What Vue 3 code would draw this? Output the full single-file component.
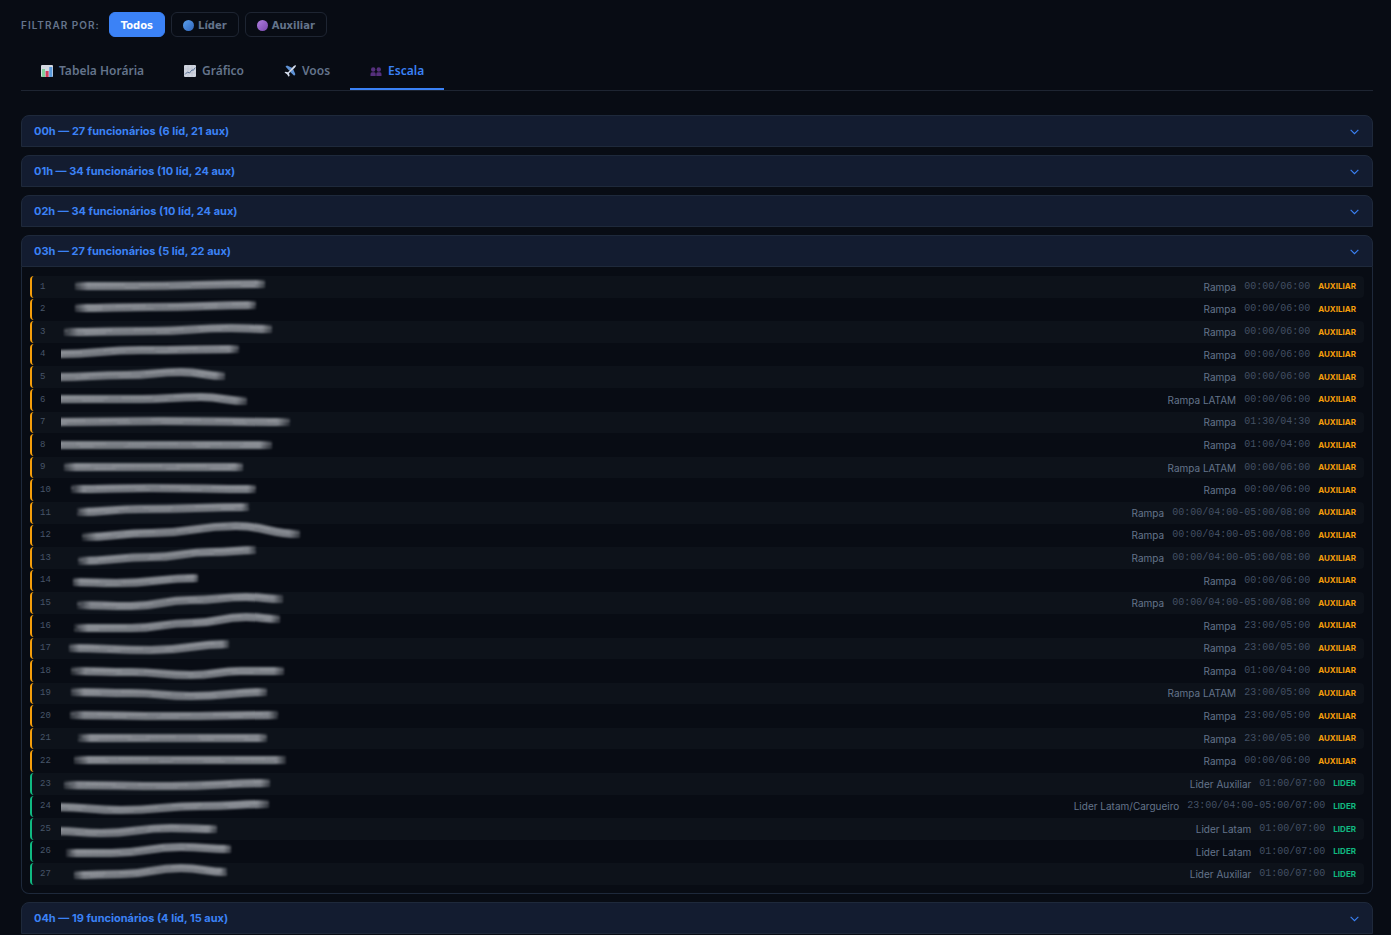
<template>
  <main class="page">
    <div class="filters">
      <span class="filters-label">Filtrar por:</span>
      <button
        v-for="f in filters"
        :key="f.id"
        type="button"
        class="filter"
        :class="{ active: filter === f.id }"
        @click="filter = f.id"
      >
        <span v-if="f.dot" class="dot" :class="f.dot"></span>
        {{ f.label }}
      </button>
    </div>

    <nav class="tabs">
      <button
        v-for="t in tabs"
        :key="t.id"
        type="button"
        class="tab"
        :class="{ active: tab === t.id }"
        @click="tab = t.id"
      >
        <svg v-if="t.id === 'tabela'" class="tab-icon" viewBox="0 0 12 12" aria-hidden="true">
          <rect width="12" height="12" rx="1" fill="#d5d9e2" />
          <rect x="1" y="4" width="3" height="8" fill="#7fd09a" />
          <rect x="4.6" y="6" width="3" height="6" fill="#d03c5c" />
          <rect x="8.3" y="2" width="3" height="10" fill="#5b9bdc" />
        </svg>
        <svg v-else-if="t.id === 'grafico'" class="tab-icon" viewBox="0 0 12 12" aria-hidden="true">
          <rect width="12" height="12" rx="1" fill="#cfd4de" />
          <path d="M0 4h12M0 8h12M4 0v12M8 0v12" stroke="#b3bac8" stroke-width=".5" />
          <path d="M1 9.5 3.5 7l2 1L8 4.8l1.200.7L11.300 2.500" fill="none" stroke="#5d7699" stroke-width="1" />
        </svg>
        <svg v-else-if="t.id === 'voos'" class="tab-icon" viewBox="0 0 12 12" aria-hidden="true">
          <path d="M1.500 1.500 3 .6 8.500 3 5.300 5.800zM9 3.800l2.400 5.500-1.200 1.500L6.200 7z" fill="#5f93d6" />
          <path d="M.5 7.500l1-.8 2.500.6L9.500 1.200Q11 0 12 .3 12 1.500 10.800 2.700L5 8.200l.6 2.500-.9 1L3 9.300z" fill="#d3dbea" />
        </svg>
        <svg v-else class="tab-icon people" viewBox="0 0 12 12" aria-hidden="true">
          <circle cx="3.200" cy="4.500" r="2.200" />
          <circle cx="8.800" cy="4.500" r="2.200" />
          <path d="M.5 11V9q0-1.800 1.500-1.800h2.500q1.200 0 1.200 1.800v2zM6.300 11V9q0-1.800 1.200-1.800H10q1.500 0 1.500 1.800v2z" />
        </svg>
        {{ t.label }}
      </button>
    </nav>

    <section v-for="g in groups" :key="g.hour" class="group">
      <button type="button" class="group-head" :aria-expanded="open === g.hour" @click="toggle(g.hour)">
        <span>{{ g.hour }}h — {{ g.total }} funcionários ({{ g.lid }} líd, {{ g.aux }} aux)</span>
        <svg class="chevron" viewBox="0 0 10 10" aria-hidden="true">
          <path d="M1.500 3.500 5 7l3.500-3.500" />
        </svg>
      </button>
      <ol v-if="open === g.hour" class="staff">
        <li v-for="(p, i) in staff" :key="i" class="person" :class="p.level">
          <span class="num">{{ i + 1 }}</span>
          <svg class="name" viewBox="0 0 250 22" aria-hidden="true">
            <defs>
              <linearGradient
                :id="`fade-${i}`"
                gradientUnits="userSpaceOnUse"
                :x1="p.name[0][0] < 0 ? -40 : p.name[0][0] - 3"
                :x2="p.name[p.name.length - 1][0] + 3"
                y1="0"
                y2="0"
              >
                <stop offset="0" stop-color="#858990" stop-opacity="0" />
                <stop offset=".08" stop-color="#858990" />
                <stop offset=".45" stop-color="#7b7f86" />
                <stop offset=".94" stop-color="#858990" />
                <stop offset="1" stop-color="#858990" stop-opacity="0" />
              </linearGradient>
            </defs>
            <path class="smear" :d="curve(p.name)" :stroke="`url(#fade-${i})`" />
            <path class="streak" :d="curve(p.name, -1)" :stroke-dashoffset="i * 23" />
            <path class="streak dim" :d="curve(p.name, 2)" :stroke-dashoffset="i * 37" />
          </svg>
          <span class="role">{{ p.role }}</span>
          <span class="time">{{ p.time }}</span>
          <span class="level">{{ p.level }}</span>
        </li>
      </ol>
    </section>
  </main>
</template>

<script setup>
import { ref } from 'vue'

const filter = ref('todos')
const tab = ref('escala')
const open = ref('03')

const filters = [
  { id: 'todos', label: 'Todos' },
  { id: 'lider', label: 'Líder', dot: 'blue' },
  { id: 'auxiliar', label: 'Auxiliar', dot: 'purple' },
]

const tabs = [
  { id: 'tabela', label: 'Tabela Horária' },
  { id: 'grafico', label: 'Gráfico' },
  { id: 'voos', label: 'Voos' },
  { id: 'escala', label: 'Escala' },
]

const groups = [
  { hour: '00', total: 27, lid: 6, aux: 21 },
  { hour: '01', total: 34, lid: 10, aux: 24 },
  { hour: '02', total: 34, lid: 10, aux: 24 },
  { hour: '03', total: 27, lid: 5, aux: 22 },
  { hour: '04', total: 19, lid: 4, aux: 15 },
]

const aux = (time, name, role = 'Rampa') => ({ level: 'auxiliar', role, time, name })
const lider = (time, name, role) => ({ level: 'lider', role, time, name })

// name holds the points of the smear that hides the employee's name
const staff = [
  aux('00:00/06:00', [[14, 10], [70, 10], [204, 8]]),
  aux('00:00/06:00', [[14, 10], [90, 9], [195, 7]]),
  aux('00:00/06:00', [[3, 11], [90, 10], [170, 7], [211, 8]]),
  aux('00:00/06:00', [[-4, 10], [80, 6], [178, 5]]),
  aux('00:00/06:00', [[-4, 11], [65, 9], [120, 6], [164, 10]]),
  aux('00:00/06:00', [[-4, 10], [80, 10], [140, 8], [186, 12]], 'Rampa LATAM'),
  aux('01:30/04:30', [[-4, 11], [100, 10], [229, 11]]),
  aux('01:00/04:00', [[-4, 11], [100, 11], [211, 11]]),
  aux('00:00/06:00', [[3, 10], [90, 10], [182, 10]], 'Rampa LATAM'),
  aux('00:00/06:00', [[10, 10], [90, 9], [195, 10]]),
  aux('00:00/04:00-05:00/08:00', [[16, 10], [80, 7], [188, 5]]),
  aux('00:00/04:00-05:00/08:00', [[21, 13], [90, 9], [175, 2], [239, 10]]),
  aux('00:00/04:00-05:00/08:00', [[17, 14], [90, 10], [150, 5], [195, 3]]),
  aux('00:00/06:00', [[12, 12], [55, 13], [137, 8]]),
  aux('00:00/04:00-05:00/08:00', [[16, 13], [70, 14], [130, 8], [185, 5], [222, 7]]),
  aux('23:00/05:00', [[13, 13], [70, 13], [130, 8], [185, 2], [219, 4]]),
  aux('23:00/05:00', [[8, 11], [90, 13], [168, 7]]),
  aux('01:00/04:00', [[10, 11], [70, 12], [130, 15], [180, 11], [223, 11]]),
  aux('23:00/05:00', [[10, 10], [70, 11], [130, 14], [206, 10]], 'Rampa LATAM'),
  aux('23:00/05:00', [[9, 10], [110, 11], [217, 10]]),
  aux('23:00/05:00', [[17, 10], [100, 10], [206, 10]]),
  aux('00:00/06:00', [[13, 10], [100, 10], [225, 10]]),
  lider('01:00/07:00', [[3, 12], [110, 13], [209, 10]], 'Lider Auxiliar'),
  lider('23:00/04:00-05:00/07:00', [[-4, 12], [60, 15], [140, 11], [208, 9]], 'Lider Latam/Cargueiro'),
  lider('01:00/07:00', [[-4, 13], [40, 15], [110, 10], [156, 11]], 'Lider Latam'),
  lider('01:00/07:00', [[5, 12], [50, 12], [120, 6], [170, 8]], 'Lider Latam'),
  lider('01:00/07:00', [[13, 12], [60, 11], [120, 5], [166, 9]], 'Lider Auxiliar'),
]

const toggle = (hour) => {
  open.value = open.value === hour ? null : hour
}

// Smooth line through the points, moved down by dy
const curve = (points, dy = 0) => {
  let [px, py] = points[0]
  let d = `M${px} ${py + dy}`
  for (const [x, y] of points.slice(1)) {
    const mid = (px + x) / 2
    d += `C${mid} ${py + dy} ${mid} ${y + dy} ${x} ${y + dy}`
    px = x
    py = y
  }
  return d
}
</script>

<style>
body {
  background: #080c14;
}
</style>

<style scoped>
.page {
  padding: 12px 18px 0 21px;
  font-family: Inter, 'Liberation Sans', sans-serif;
  color: #64748b;
}

button {
  font: inherit;
  color: inherit;
  cursor: pointer;
}

.filters {
  display: flex;
  align-items: center;
  gap: 6px;
}

.filters-label {
  margin-right: 3px;
  font-size: 10px;
  font-weight: 600;
  letter-spacing: 1px;
  text-transform: uppercase;
}

.filter {
  display: flex;
  align-items: center;
  gap: 4px;
  height: 25px;
  padding: 2px 11px 0;
  border: 1px solid #1e2532;
  border-radius: 6px;
  background: transparent;
  font-family: 'DejaVu Sans', sans-serif;
  font-size: 10px;
  font-weight: 700;
}

.filter.active {
  border-color: #3b82f6;
  background: #3b82f6;
  color: #fff;
}

.dot {
  width: 11px;
  height: 11px;
  border-radius: 50%;
}

.dot.blue {
  background: linear-gradient(135deg, #5ba0ec, #2f66bd);
}

.dot.purple {
  background: linear-gradient(135deg, #b07fe0, #7847ac);
}

.tabs {
  display: flex;
  margin: 14px 0 24px;
  border-bottom: 1px solid #1e2532;
}

.tab {
  display: flex;
  align-items: center;
  gap: 6px;
  height: 39px;
  padding: 2px 20px 0;
  border: 0;
  border-bottom: 2px solid transparent;
  background: transparent;
  font-family: 'Noto Sans', sans-serif;
  font-size: 12px;
  font-weight: 600;
}

.tab.active {
  border-bottom-color: #3b82f6;
  color: #3b82f6;
}

.tab-icon {
  width: 12px;
  height: 12px;
}

.people {
  fill: #55307c;
}

.group {
  margin-bottom: 8px;
}

.group-head {
  display: flex;
  align-items: center;
  justify-content: space-between;
  width: 100%;
  height: 32px;
  padding: 0 12px;
  border: 1px solid #1e293b;
  border-radius: 8px 8px 0 0;
  background: #131c30;
  color: #3b82f6;
  font-size: 11px;
  font-weight: 700;
  text-align: left;
}

.chevron {
  width: 11px;
  height: 11px;
  fill: none;
  stroke: #3b82f6;
  stroke-width: 1;
}

.staff {
  display: flex;
  flex-direction: column;
  gap: 1px;
  margin: 0;
  padding: 9px 8px 8px;
  border: 1px solid #1e293b;
  border-top: 0;
  border-radius: 0 0 8px 8px;
  list-style: none;
}

.person {
  display: flex;
  align-items: center;
  gap: 8px;
  padding: 2px 8px;
  border-left: 2px solid #f59e0b;
  border-radius: 4px;
  font-size: 11px;
  line-height: 1.6;
}

/* keeps every row one line of the row's own text size high */
.person::before {
  content: '';
  width: 0;
  height: 1.6em;
  margin-right: -8px;
}

.person:nth-child(odd) {
  background: #0d121a;
}

.person.lider {
  border-left-color: #10b981;
}

.num {
  width: 13px;
  color: #475569;
  font-family: 'Liberation Mono', monospace;
  font-size: 9px;
}

.name {
  width: 250px;
  height: 22px;
  margin: -4px auto -4px 0;
  overflow: visible;
  clip-path: inset(-8px -20px -8px 0);
  fill: none;
}

.smear {
  stroke-width: 8px;
  filter: blur(1px);
}

.streak {
  stroke: #a3a6ab;
  stroke-width: 1;
  stroke-dasharray: 50 14 30 22;
  opacity: 0.7;
  filter: blur(1px);
}

.dim {
  stroke: #54585f;
}

.role {
  font-size: 10px;
}

.time {
  color: #435064;
  font-family: 'Liberation Mono', monospace;
  font-size: 10px;
}

.level {
  color: #f59e0b;
  font-size: 8px;
  font-weight: 700;
  text-transform: uppercase;
}

.lider .level {
  color: #10b981;
}
</style>
